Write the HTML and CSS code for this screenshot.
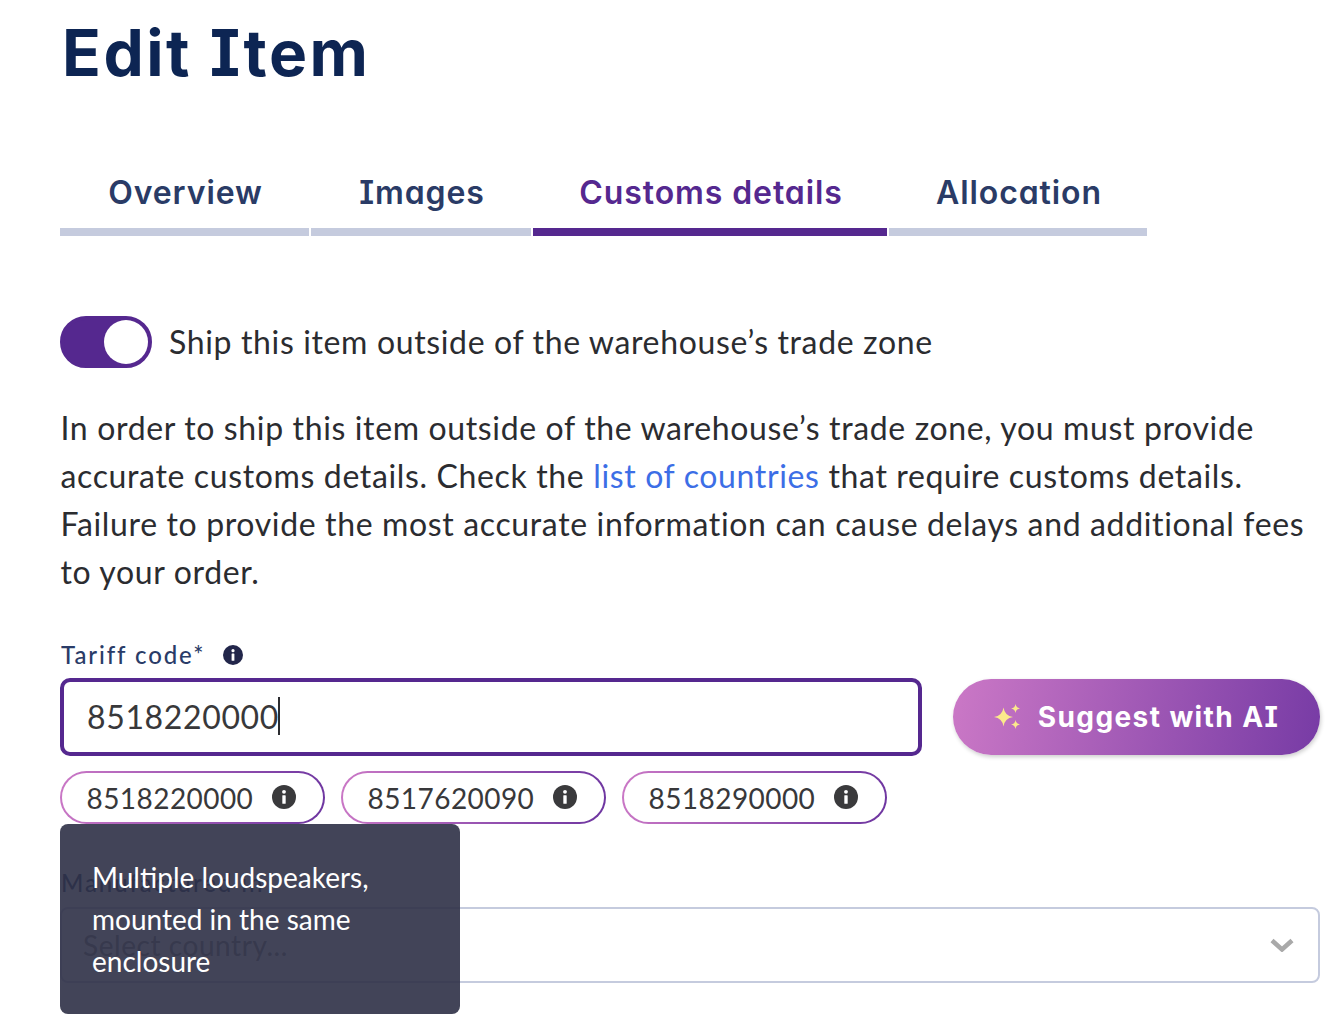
FILE: index.html
```html
<!DOCTYPE html>
<html lang="en">
<head>
<meta charset="utf-8">
<title>Edit Item</title>
<link rel="stylesheet" href="styles.css">
</head>
<body>
<main class="page">
  <h1 class="title">Edit Item</h1>
  <nav class="tabs">
    <a class="tab tab-overview">Overview</a>
    <a class="tab tab-images">Images</a>
    <a class="tab tab-customs active">Customs details</a>
    <a class="tab tab-allocation">Allocation</a>
  </nav>
  <div class="toggle-row">
    <span class="toggle"><span class="knob"></span></span>
    <span class="toggle-label">Ship this item outside of the warehouse’s trade zone</span>
  </div>
  <p class="intro">In order to ship this item outside of the warehouse’s trade zone, you must provide accurate customs details. Check the <a class="link">list of countries</a> that require customs details. Failure to provide the most accurate information can cause delays and additional fees to your order.</p>
  <div class="label-row">
    <label class="label">Tariff code*</label>
    <svg class="info info-label" viewBox="0 0 20 20"><circle cx="10" cy="10" r="10"/><circle class="glyph" cx="10" cy="5.700" r="1.600"/><rect class="glyph" x="8.600" y="8.500" width="2.800" height="7.200" rx=".5"/></svg>
  </div>
  <div class="input-row">
    <div class="input"><span class="value">8518220000</span><span class="caret"></span></div>
    <button class="ai-button">
      <svg class="sparkle" viewBox="0 0 26 26"><path d="M9.500 3.500Q10.700 11.800 19 13Q10.700 14.200 9.500 22.500Q8.300 14.200 0 13Q8.300 11.800 9.500 3.500z"/><path d="M21.500 0Q22 4 26 4.500Q22 5 21.500 9Q21 5 17 4.500Q21 4 21.500 0z"/><path d="M21.500 16Q22 20 26 20.500Q22 21 21.500 25Q21 21 17 20.500Q21 20 21.500 16z"/></svg>
      <span>Suggest with AI</span>
    </button>
  </div>
  <div class="chips">
    <span class="chip">8518220000<svg class="info info-chip" viewBox="0 0 20 20"><circle cx="10" cy="10" r="10"/><circle class="glyph" cx="10" cy="5.700" r="1.600"/><rect class="glyph" x="8.600" y="8.500" width="2.800" height="7.200" rx=".5"/></svg></span>
    <span class="chip">8517620090<svg class="info info-chip" viewBox="0 0 20 20"><circle cx="10" cy="10" r="10"/><circle class="glyph" cx="10" cy="5.700" r="1.600"/><rect class="glyph" x="8.600" y="8.500" width="2.800" height="7.200" rx=".5"/></svg></span>
    <span class="chip">8518290000<svg class="info info-chip" viewBox="0 0 20 20"><circle cx="10" cy="10" r="10"/><circle class="glyph" cx="10" cy="5.700" r="1.600"/><rect class="glyph" x="8.600" y="8.500" width="2.800" height="7.200" rx=".5"/></svg></span>
    <div class="tooltip">Multiple loudspeakers, mounted in the same enclosure</div>
  </div>
  <label class="label label-country">Manufactured in</label>
  <div class="select">
    <span class="placeholder">Select country...</span>
    <svg class="chevron" viewBox="0 0 24 14"><path d="M2 2.500l10 9 10-9"/></svg>
  </div>
</main>
</body>
</html>
```
FILE: styles.css
```css
* { box-sizing: border-box; }
html, body { margin: 0; background: #fff; }
body { font-family: "Lato", "Liberation Sans", sans-serif; color: #2b2c30; overflow: hidden; height: 1022px; }
.page { padding: 0 20px 0 60px; }
.title {
  margin: 0; height: 106px; line-height: 106px;
  font-family: "Inter", "Liberation Sans", sans-serif; font-feature-settings: "cv08", "cv11";
  font-size: 64px; font-weight: 700; color: #0d2553; padding-left: 2px; letter-spacing: 2.5px;
}
.tabs { display: flex; gap: 2px; margin-top: 63px; }
.tab {
  display: block; height: 67px; line-height: 48px; text-align: center; padding-left: 2px;
  border-bottom: 8px solid #c5cbde;
  font-family: "Inter", "Liberation Sans", sans-serif; font-feature-settings: "cv08", "cv11";
  font-size: 32px; font-weight: 600; color: #2a3b66; letter-spacing: .9px;
}
.tab-overview { width: 249px; }
.tab-images { width: 220px; }
.tab-customs { width: 354px; }
.tab-allocation { width: 258px; }
.tab.active { color: #55288f; border-bottom-color: #55288f; }
.toggle-row { display: flex; align-items: center; gap: 17px; margin-top: 80px; }
.toggle {
  display: flex; justify-content: flex-end; width: 92px; height: 52px;
  border: 4px solid #55288f; border-radius: 26px; background: #55288f;
}
.knob { width: 44px; height: 44px; border-radius: 50%; background: #fff; }
.toggle-label { font-size: 32px; line-height: 48px; letter-spacing: .64px; }
.intro { margin: 36px 0 0; padding-left: .5px; font-size: 32px; line-height: 48px; letter-spacing: .64px; }
.link { color: #3c6ee6; }
.label-row { display: flex; align-items: center; gap: 18px; margin-top: 41px; }
.label { display: block; font-size: 24px; font-weight: 500; line-height: 36px; letter-spacing: 1.9px; color: #2a3c68; padding-left: 1px; }
.info { display: block; fill: #22264a; }
.info .glyph { fill: #fff; }
.info-label { width: 20px; height: 20px; }
.info-chip { width: 24px; height: 24px; fill: #3a3a3c; margin-top: -2px; }
.input-row { display: flex; align-items: center; gap: 31px; margin-top: 5px; }
.input {
  display: flex; align-items: center; width: 862px; height: 78px; padding: 0 0 2px 23px;
  border: 4px solid #55288f; border-radius: 10px; font-size: 32px; letter-spacing: .64px; color: #38383a;
}
.caret { width: 2px; height: 38px; background: #2b2c30; margin-left: -1px; }
.ai-button {
  display: flex; align-items: center; justify-content: center; gap: 18px; flex: 1; height: 76px;
  border: 0; border-radius: 38px; padding: 0;
  background: linear-gradient(100deg, #cb78c6 0%, #773ba5 100%);
  box-shadow: 1px 2px 4px rgba(0,0,0,.2);
  font-family: "Inter", "Liberation Sans", sans-serif; font-feature-settings: "cv08", "cv11";
  font-size: 28px; font-weight: 700; color: #fff; letter-spacing: 1.4px;
}
.sparkle { width: 26px; height: 26px; fill: #fbe98c; }
.chips { position: relative; display: flex; gap: 16px; margin-top: 15px; }
.chip {
  display: flex; align-items: center; gap: 19px; height: 53px; padding: 0 26.700px 0 24.500px;
  border: 2px solid transparent; border-radius: 27px;
  background: linear-gradient(#fff, #fff) padding-box, linear-gradient(100deg, #cb78c6, #6d35a0) border-box;
  font-size: 28px; letter-spacing: .44px; color: #38383a;
}
.tooltip {
  position: absolute; left: 0; top: 53px; width: 400px; padding: 32px;
  border-radius: 8px; background: rgba(45, 48, 70, .9);
  font-size: 28px; line-height: 42px; color: #fff;
}
.label-country { margin-top: 41px; }
.select {
  display: flex; align-items: center; justify-content: space-between; height: 76px; margin-top: 6px;
  padding: 0 24px 0 21px; border: 2px solid #c5cbde; border-radius: 8px;
}
.placeholder { font-size: 28px; letter-spacing: .56px; color: #8a8a8e; }
.chevron { width: 24px; height: 14px; fill: none; stroke: #a9a9a9; stroke-width: 4.500; }
```
